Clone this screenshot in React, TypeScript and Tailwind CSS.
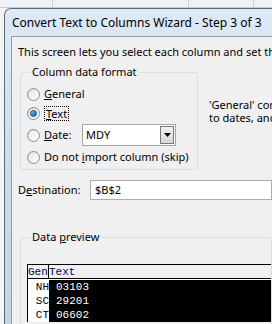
import React from 'react';

const ui = { fontFamily: '"Noto Sans", "Open Sans", sans-serif' };
const mono = { fontFamily: '"Liberation Mono", "Courier New", monospace' };

const Radio: React.FC<{ checked?: boolean }> = ({ checked }) => (
  <span className="relative flex h-[13px] w-[13px] shrink-0 items-center justify-center rounded-full border border-[#8e8f8f] bg-gradient-to-br from-[#d8d8d8] to-[#fbfbfb]">
    <span className="h-[9px] w-[9px] rounded-full bg-gradient-to-br from-[#e6e6e6] to-[#ffffff]" />
    {checked && (
      <span className="absolute h-[7px] w-[7px] rounded-full border border-[#1a4f85] bg-gradient-to-br from-[#74c3f0] to-[#0f5da3]" />
    )}
  </span>
);

const rows = [
  ['NH', '03103'],
  ['SC', '29201'],
  ['CT', '06602'],
];

export default function App() {
  return (
    <div className="relative h-[324px] w-[272px] overflow-hidden bg-[#f5f5f5]" style={ui}>
      {/* sheet behind the dialog */}
      <div className="flex h-[8px] border-b border-[#c9ced6] bg-[#eef1f5]">
        <div className="w-[53px] border-r border-[#c9ced6]" />
        <div className="w-[136px] border-r border-[#c9ced6]" />
        <div className="w-[65px] border-r border-[#c9ced6]" />
      </div>

      <div className="pl-[4px]">
        {/* window */}
        <div className="rounded-tl-[7px] border-l border-t border-[#5a6b7e] bg-gradient-to-b from-[#dde9f5] via-[#cddcec] to-[#c3d4e6] pl-[6px]">
          {/* title bar */}
          <div className="flex h-[27px] items-center pl-[1px] text-[12px] text-black">
            Convert Text to Columns Wizard - Step 3 of 3
          </div>

          {/* client */}
          <div className="h-[290px] border-l border-t border-[#8a9db3] bg-[#f0f0f0] text-[11px] leading-[14px] text-black">
            <div className="whitespace-nowrap pl-[6px] pt-[8px]">
              This screen lets you select each column and set the Data Format.
            </div>

            <div className="mt-[13px] flex items-start">
              <div className="ml-[8px] flex h-[98px] w-[178px] shrink-0 flex-col rounded-[3px] border border-[#d5dfe5] pl-[6px]">
                <span className="-mt-[8px] ml-[3px] h-[14px] w-fit bg-[#f0f0f0] px-[2px]">Column data format</span>
                <label className="mt-[7px] flex h-[16px] items-center gap-[4px]">
                  <Radio />
                  <span>
                    <u>G</u>eneral
                  </span>
                </label>
                <label className="mt-[3px] flex h-[16px] items-center gap-[4px]">
                  <Radio checked />
                  <span className="border border-dotted border-black px-[1px] leading-[13px]">
                    <u>T</u>ext
                  </span>
                </label>
                <div className="mt-[3px] flex h-[22px] items-center">
                  <label className="flex w-[55px] items-center gap-[4px]">
                    <Radio />
                    <span>
                      <u>D</u>ate:
                    </span>
                  </label>
                  <div className="flex h-[22px] w-[94px] items-center justify-between border border-[#a5a5a5] bg-white pl-[3px] pr-[1px]">
                    <span>MDY</span>
                    <span className="flex h-[18px] w-[14px] items-center justify-center border border-[#7a7a7a] bg-gradient-to-b from-[#f2f2f2] to-[#d6d6d6]">
                      <svg width="7" height="4" viewBox="0 0 7 4">
                        <path d="M0 0h7L3.5 4z" fill="#000" />
                      </svg>
                    </span>
                  </div>
                </div>
                <label className="mt-[3px] flex h-[16px] items-center gap-[4px] whitespace-nowrap">
                  <Radio />
                  <span>
                    Do not <u>i</u>mport column (skip)
                  </span>
                </label>
              </div>

              <div className="ml-[11px] mt-[26px] whitespace-nowrap leading-[13px]">
                <div>'General' converts numeric values to numbers,</div>
                <div>to dates, and all remaining values to text.</div>
              </div>
            </div>

            <div className="mt-[10px] flex items-center pl-[6px]">
              <span className="w-[72px]">
                D<u>e</u>stination:
              </span>
              <div className="flex h-[20px] flex-1 items-center border border-[#abadb3] bg-white pl-[4px]">
                $B$2
              </div>
            </div>

            <div className="ml-[8px] mt-[37px] flex h-[120px] flex-col rounded-[3px] border border-[#d5dfe5] pl-[6px]">
              <span className="-mt-[8px] ml-[3px] h-[14px] w-fit bg-[#f0f0f0] px-[2px]">
                Data <u>p</u>review
              </span>
              <div className="mt-[20px] border-l border-t border-black bg-white text-[11px] leading-[14px]" style={mono}>
                <div className="flex h-[14px] border-b border-black bg-[#f0f0f0] text-[#000060]">
                  <span className="w-[21px] border-r border-black">Gen</span>
                  <span className="flex-1">Text</span>
                </div>
                <div className="flex border-t border-white">
                  <div className="w-[21px] bg-white">
                    {rows.map(([a]) => (
                      <div key={a} className="h-[14px] text-right">
                        {a}
                      </div>
                    ))}
                  </div>
                  <div className="flex-1 bg-black pl-[7px] text-white">
                    {rows.map(([a, b]) => (
                      <div key={a} className="h-[14px]">
                        {b}
                      </div>
                    ))}
                  </div>
                </div>
              </div>
            </div>
          </div>
        </div>
      </div>
    </div>
  );
}
